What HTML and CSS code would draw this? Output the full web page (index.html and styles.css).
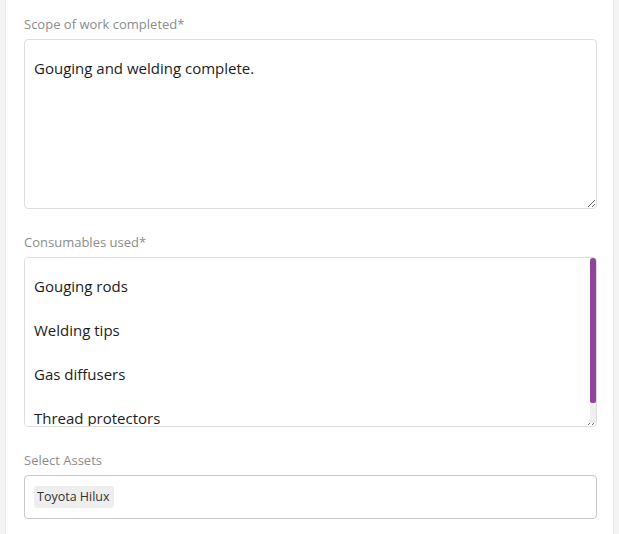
FILE: index.html
```html
<!DOCTYPE html>
<html lang="en">
<head>
  <meta charset="UTF-8">
  <meta name="viewport" content="width=device-width, initial-scale=1.0">
  <title>Job report</title>
  <link rel="stylesheet" href="styles.css">
</head>
<body>
  <div class="panel">
    <div class="field">
      <label class="label" for="scope">Scope of work completed*</label>
      <textarea class="textbox" id="scope">Gouging and welding complete.</textarea>
    </div>

    <div class="field">
      <label class="label" for="consumables">Consumables used*</label>
      <div class="scroll-wrap">
        <textarea class="textbox scroll" id="consumables">Gouging rods

Welding tips

Gas diffusers

Thread protectors</textarea>
        <div class="track"><div class="thumb"></div></div>
      </div>
    </div>

    <div class="field">
      <label class="label">Select Assets</label>
      <div class="select">
        <span class="chip">Toyota Hilux</span>
      </div>
    </div>
  </div>
</body>
</html>
```

FILE: styles.css
```css
body {
  margin: 0;
  background-color: #f4f4f4;
  font-family: "Open Sans", "Liberation Sans", sans-serif;
}

.panel {
  margin: 0 5px 0 5px;
  min-height: 534px;
  box-sizing: border-box;
  padding: 14px 16px 0 18px;
  background-color: #fff;
  border-left: 1px solid #ebebeb;
  border-right: 1px solid #e4e4e4;
}

.field {
  margin-bottom: 23px;
}

.label {
  display: block;
  font-size: 13px;
  line-height: 20px;
  color: #8c8c8c;
  margin-bottom: 5px;
}

.textbox {
  display: block;
  width: 100%;
  height: 170px;
  box-sizing: border-box;
  padding: 17px 9px;
  border: 1px solid #dedede;
  border-radius: 4px;
  font-family: inherit;
  font-size: 15px;
  line-height: 22px;
  color: #1c1c1c;
  resize: vertical;
  outline: none;
}

.scroll-wrap {
  position: relative;
}

.scroll {
  overflow-y: scroll;
  scrollbar-width: none;
}

.track {
  position: absolute;
  top: 1px;
  right: 1px;
  width: 6px;
  height: 165px;
  background-color: #efefef;
}

.thumb {
  height: 145px;
  background-color: #8e4499;
  border-radius: 3px 3px 2px 2px;
}

.select {
  height: 44px;
  box-sizing: border-box;
  padding: 0 9px;
  display: flex;
  align-items: center;
  border: 1px solid #c9c9c9;
  border-radius: 4px;
}

.chip {
  background-color: #eeeeee;
  border-radius: 3px;
  padding: 0 4px 0 3px;
  font-size: 12.5px;
  line-height: 22px;
  color: #333;
}
```
